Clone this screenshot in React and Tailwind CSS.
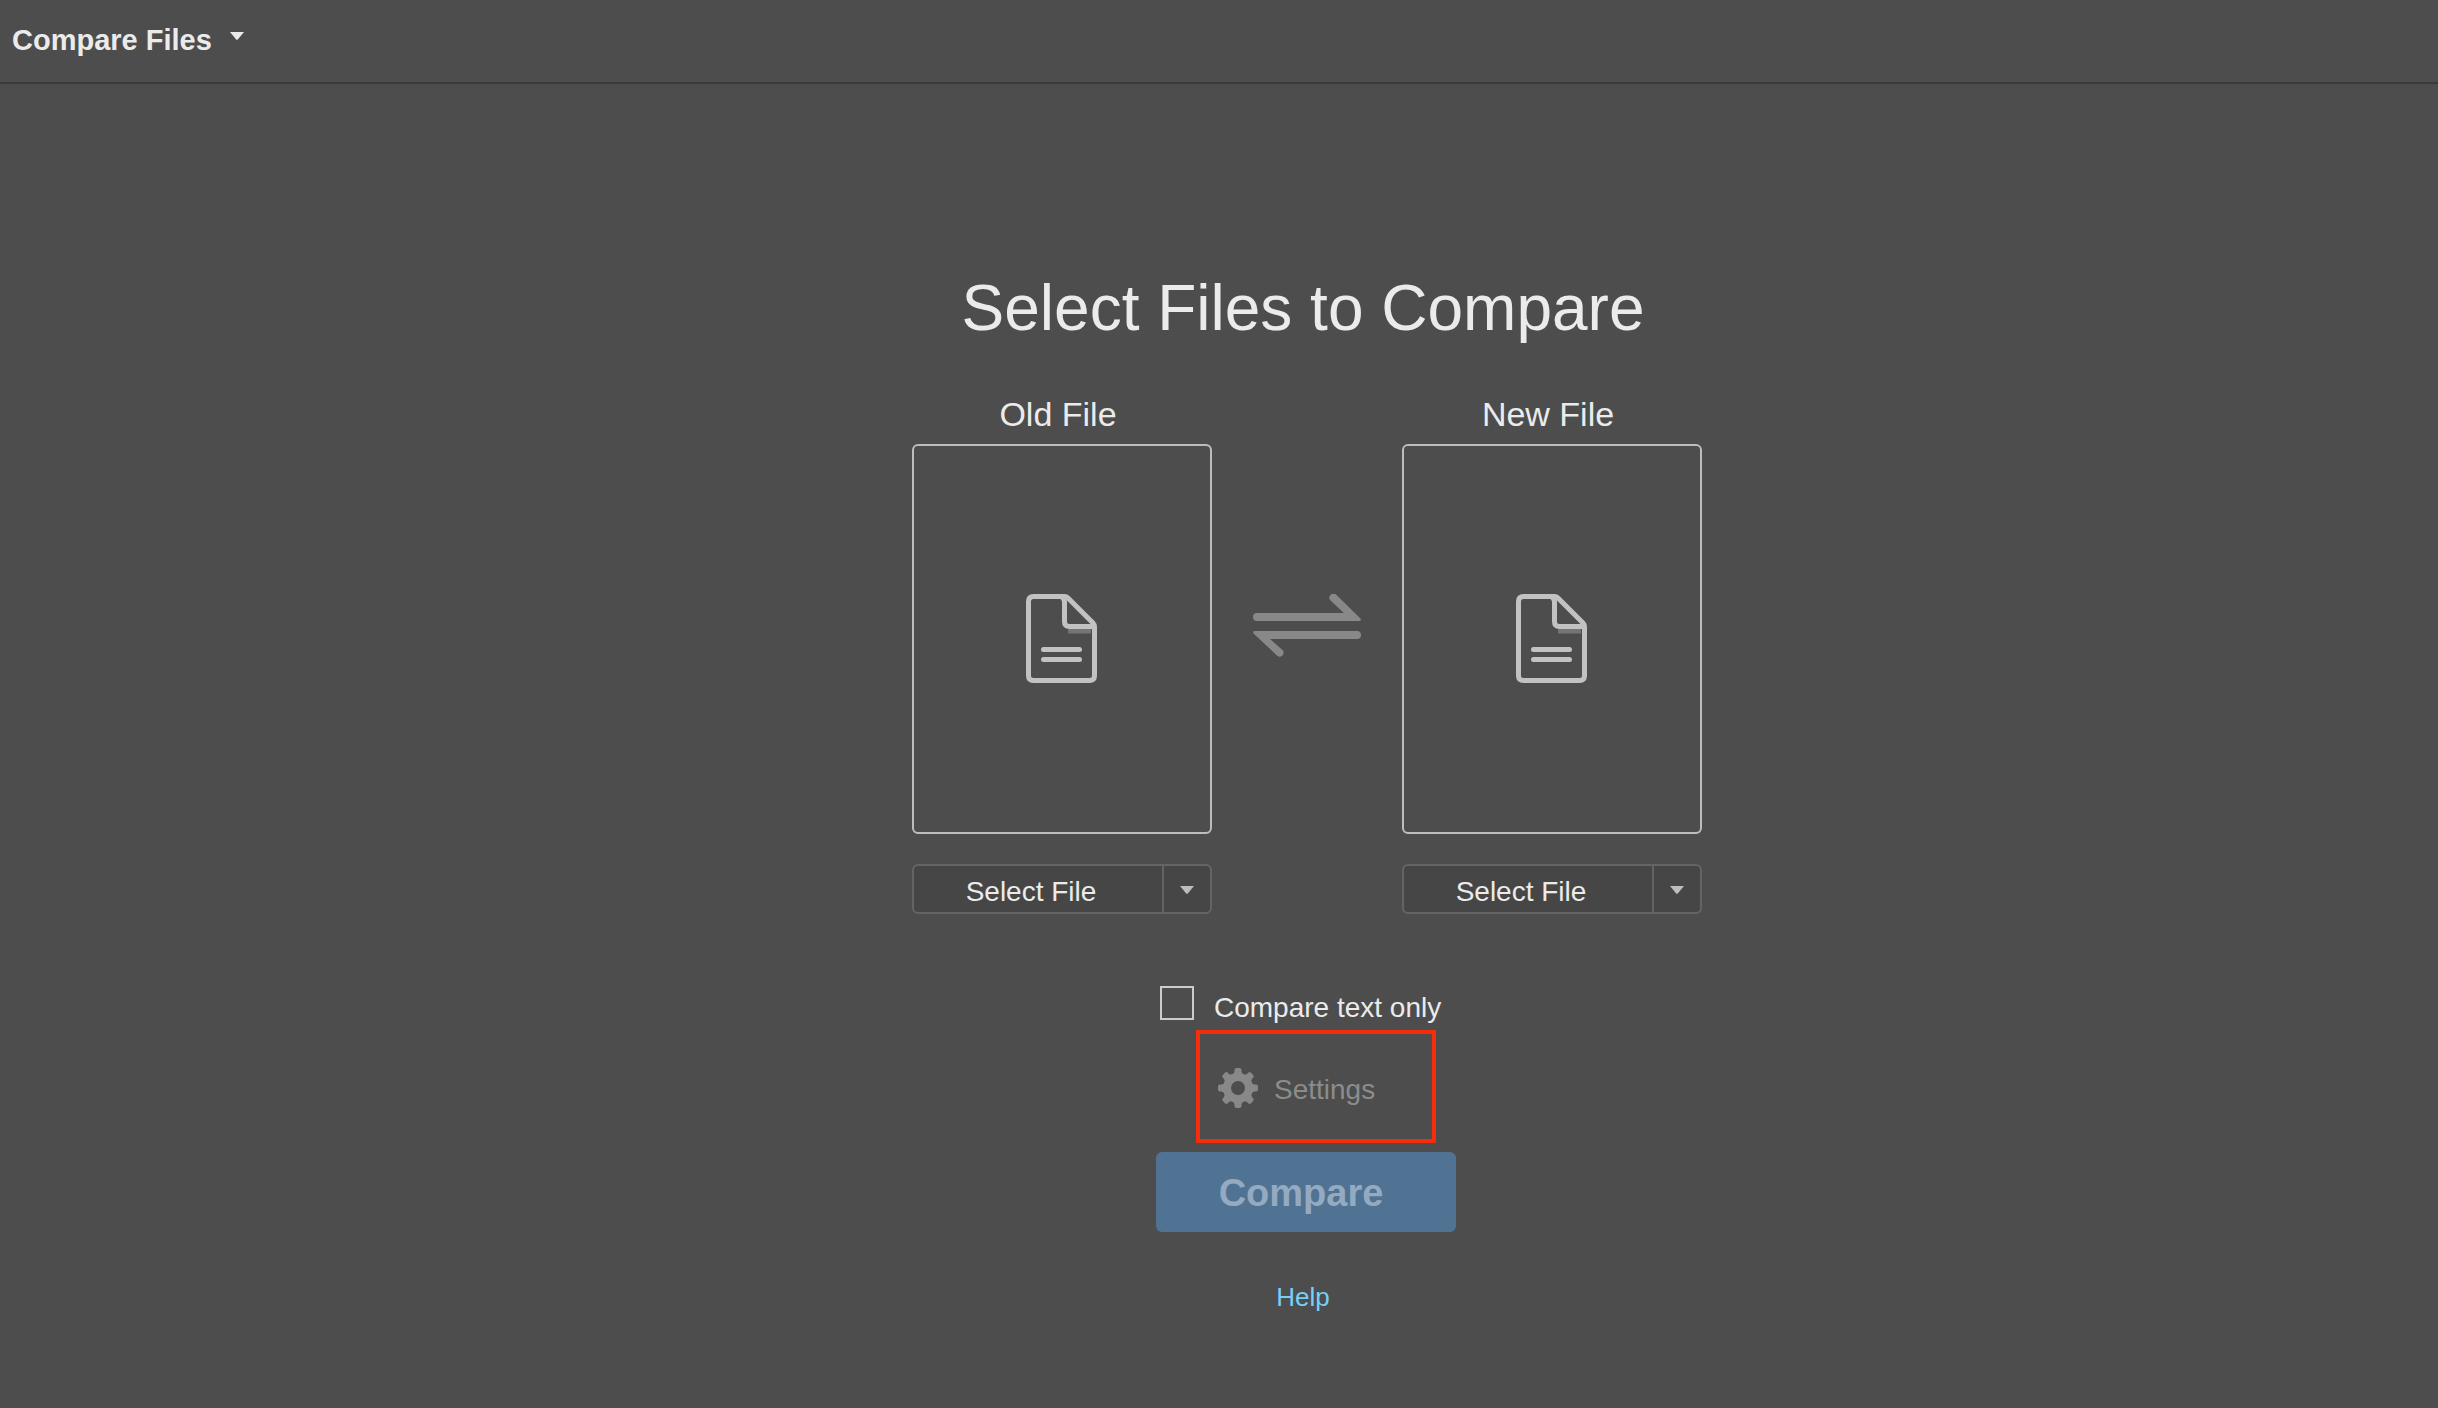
function Caret({ className }) {
  return (
    <svg aria-hidden="true" viewBox="0 0 14 8" className={className} fill="currentColor">
      <path d="M0 0h14L7.8 7.4q-.8.9-1.6 0z" />
    </svg>
  );
}

function DocumentIcon() {
  return (
    <svg aria-hidden="true" viewBox="0 0 71 89" className="h-[89px] w-[71px]" fill="none">
      <path d="M42 37h23" stroke="#757575" strokeWidth="5" />
      <g stroke="#c2c2c2" strokeWidth="5" strokeLinejoin="round">
        <path d="M7.500 2.500H38.500Q40.500 2.500 42 4L67 29Q68.500 30.500 68.500 33V81.500Q68.500 86.500 63.500 86.500H7.500Q2.500 86.500 2.500 81.500V7.500Q2.500 2.500 7.500 2.500Z" />
        <path d="M36 3Q38.500 5 38.500 8V27.500Q38.500 32.500 43.500 32.500H67" />
        <path d="M17.500 55.500h36M17.500 65.500h36" strokeLinecap="round" />
      </g>
    </svg>
  );
}

function SwapIcon() {
  return (
    <svg aria-hidden="true" viewBox="0 0 108 64" className="mt-[200px] h-16 w-[108px]" fill="#888888">
      <path d="M4 19H91L77.500 6.500A4 4 0 0 1 83.500 1L107.500 24.500Q108.500 27 106.500 27H4A4 4 0 0 1 4 19Z" />
      <path d="M104 37H2Q-.5 37 .5 39.500L24.500 62A4 4 0 0 0 30 56.500L17 45H104A4 4 0 0 0 104 37Z" />
    </svg>
  );
}

function GearIcon() {
  return (
    <svg aria-hidden="true" viewBox="-20 -20 40 40" className="size-10" fill="#888888">
      <circle r="11" fill="none" stroke="#888888" strokeWidth="8" />
      {[0, 45, 90, 135, 180, 225, 270, 315].map((angle) => (
        <path
          key={angle}
          transform={`rotate(${angle})`}
          d="M-6 -13Q-3.500 -14.500 -3.500 -16.500V-18Q-3.500 -20 -1.500 -20H1.500Q3.500 -20 3.500 -18V-16.500Q3.500 -14.500 6 -13Z"
        />
      ))}
    </svg>
  );
}

function FilePicker({ label }) {
  return (
    <section className="flex w-[300px] flex-col" aria-label={label}>
      <h2 className="pr-2 text-center text-[34px] leading-10">{label}</h2>
      <div className="mt-2.5 flex h-[390px] items-center justify-center rounded-md border-2 border-[#bdbdbd] pr-0.5 pb-0.5">
        <DocumentIcon />
      </div>
      <div className="mt-[30px] flex h-[50px] rounded-md border-2 border-[#646464] bg-[#464646]">
        <button type="button" className="flex-1 pt-1.5 pr-3.5 text-center text-[28px] leading-9">
          Select File
        </button>
        <button
          type="button"
          aria-label={`${label} options`}
          className="flex w-12 items-center justify-center border-l-2 border-[#646464] pt-0.5 text-[#bdbdbd]"
        >
          <Caret className="h-2 w-3.5" />
        </button>
      </div>
    </section>
  );
}

export default function App() {
  return (
    <div className="flex min-h-screen flex-col bg-[#4d4d4d] font-['Liberation_Sans',Arial,sans-serif] text-[#ebebeb]">
      <header className="flex h-[84px] border-b-2 border-[#3a3a3a] px-3">
        <button type="button" className="flex items-center gap-[18px] pb-0.5 text-[29px] leading-9 font-bold">
          Compare Files
          <Caret className="mb-2 h-2 w-3.5" />
        </button>
      </header>

      <main className="flex flex-1 flex-col items-center pt-[188px] pb-20 pl-44">
        <h1 className="pr-2 text-[64px] leading-[72px]">Select Files to Compare</h1>

        <div className="mt-[50px] flex">
          <FilePicker label="Old File" />
          <button type="button" aria-label="Swap files" className="flex w-[190px] items-start justify-center">
            <SwapIcon />
          </button>
          <FilePicker label="New File" />
        </div>

        <div className="mt-[72px] flex w-[302px] flex-col items-start">
          <label className="ml-1 flex h-10 items-start gap-5 text-[28px] leading-9 whitespace-nowrap">
            <input
              type="checkbox"
              className="size-[34px] shrink-0 appearance-none border-2 border-[#cccccc] checked:bg-[#78d0f8]"
            />
            <span className="pt-1">Compare text only</span>
          </label>

          <div className="mt-1 ml-10 flex h-[113px] w-60 items-center border-4 border-[#f62d0c] px-[18px]">
            <button type="button" className="flex items-center gap-4 pt-0.5 text-[28px] leading-9 text-[#8c8c8c]">
              <GearIcon />
              <span className="pt-1">Settings</span>
            </button>
          </div>

          <button
            type="button"
            className="mt-[9px] h-20 w-[300px] rounded-md bg-[#507293] pt-0.5 pr-2.5 text-[38px] leading-10 font-bold text-[#94aac1]"
          >
            Compare
          </button>
        </div>

        <a href="#help" className="mt-[49px] mr-2 text-[26px] leading-8 text-[#78d0f8]">
          Help
        </a>
      </main>
    </div>
  );
}
